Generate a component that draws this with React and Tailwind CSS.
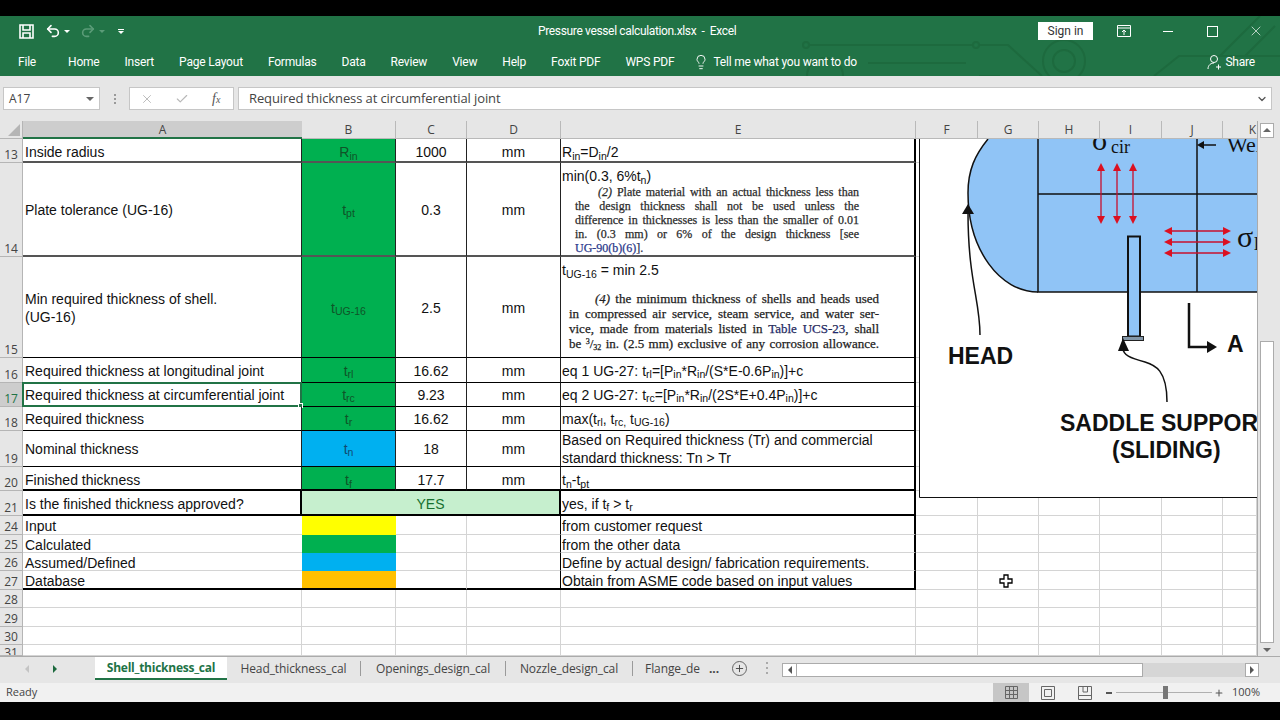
import { Undo2, Redo2, Lightbulb, X, Check, ChevronDown, Plus } from 'lucide-react'

const COLS = 'grid grid-rows-1 grid-cols-[23px_279px_94px_71px_94px_355px_62px_61px_61px_62px_61px_34px]'
const GREEN = 'bg-[#00b050] text-[#0f5428]'
const BLUE = 'bg-[#00b0f0] text-[#124a72]'

function S({ children }) {
    return <sub className="text-[10.5px]">{children}</sub>
}

function BookOne() {
    const lines = [
        'difference in thicknesses is less than the smaller of 0.01',
        'in. (0.3 mm) or 6% of the design thickness [see',
    ]
    return (
        <div className="ml-[13px] w-[284px] font-['Liberation_Serif',serif] text-[12px] leading-[14px] text-[#2b2b2b] [-webkit-text-stroke:0.25px_#2b2b2b] [text-align-last:justify]">
            <div className="pl-[23px]"><i>(2)</i> Plate material with an actual thickness less than</div>
            <div>the design thickness shall not be used unless the</div>
            {lines.map((l) => <div key={l}>{l}</div>)}
            <div className="text-[#2b3a8c] [-webkit-text-stroke:0.25px_#2b3a8c] [text-align-last:left]">UG-90(b)(6)<span className="text-[#2b2b2b]">].</span></div>
        </div>
    )
}

function BookTwo() {
    return (
        <div className="ml-[7px] mt-[8px] w-[310px] font-['Liberation_Serif',serif] text-[13px] leading-[15px] text-[#222] [-webkit-text-stroke:0.25px_#222] [text-align-last:justify]">
            <div className="pl-[26px]"><i>(4)</i> the minimum thickness of shells and heads used</div>
            <div>in compressed air service, steam service, and water ser-</div>
            <div>vice, made from materials listed in <span className="text-[#1f2f96]">Table UCS-23</span>, shall</div>
            <div>be <sup className="text-[8px]">3</sup>/<sub className="text-[8px]">32</sub> in. (2.5 mm) exclusive of any corrosion allowance.</div>
        </div>
    )
}

const rows = [
    { n: 13, h: 'h-[24px]', pad: 'pt-[4px]', line: 'border-b-2 border-b-[#555]', a: 'Inside radius', b: <>R<S>in</S></>, fill: GREEN, c: '1000', d: 'mm', e: <>R<S>in</S>=D<S>in</S>/2</> },
    { n: 14, h: 'h-[94px]', pad: 'pt-[1px]', line: 'border-b-2 border-b-[#555]', a: 'Plate tolerance (UG-16)', b: <>t<S>pt</S></>, fill: GREEN, c: '0.3', d: 'mm', top: true, e: <><div className="-mb-[4px] leading-[26px]">min(0.3, 6%t<S>n</S>)</div><BookOne /></> },
    { n: 15, h: 'h-[101px]', pad: 'pt-[1px]', line: 'border-b border-b-black', a: <>Min required thickness of shell.<br />(UG-16)</>, b: <>t<S>UG-16</S></>, fill: GREEN, c: '2.5', d: 'mm', top: true, e: <><div className="leading-[26px]">t<S>UG-16</S> = min 2.5</div><BookTwo /></> },
    { n: 16, h: 'h-[25px]', pad: 'pt-[1px]', line: 'border-b border-b-black', a: 'Required thickness at longitudinal joint', b: <>t<S>rl</S></>, fill: GREEN, c: '16.62', d: 'mm', e: <>eq 1 UG-27: t<S>rl</S>=[P<S>in</S>*R<S>in</S>/(S*E-0.6P<S>in</S>)]+c</> },
    { n: 17, h: 'h-[24px]', pad: '', line: 'border-b border-b-black', sel: true, a: 'Required thickness at circumferential joint', b: <>t<S>rc</S></>, fill: GREEN, c: '9.23', d: 'mm', e: <>eq 2 UG-27: t<S>rc</S>=[P<S>in</S>*R<S>in</S>/(2S*E+0.4P<S>in</S>)]+c</> },
    { n: 18, h: 'h-[24px]', pad: '', line: 'border-b border-b-black', a: 'Required thickness', b: <>t<S>r</S></>, fill: GREEN, c: '16.62', d: 'mm', e: <>max(t<S>rl</S>, t<S>rc,</S> t<S>UG-16</S>)</> },
    { n: 19, h: 'h-[36px]', pad: '', line: 'border-b border-b-black', a: 'Nominal thickness', b: <>t<S>n</S></>, fill: BLUE, c: '18', d: 'mm', e: <>Based on Required thickness (Tr) and commercial<br />standard thickness: Tn &gt; Tr</> },
    { n: 20, h: 'h-[24px]', pad: 'pt-[4px]', line: 'border-b-2 border-b-black', a: 'Finished thickness', b: <>t<S>f</S></>, fill: GREEN, c: '17.7', d: 'mm', e: <>t<S>n</S>-t<S>pt</S></> },
]

const legend = [
    { n: 24, h: 'h-[19px]', a: 'Input', fill: 'bg-[#ffff00]', e: 'from customer request' },
    { n: 25, h: 'h-[18px]', a: 'Calculated', fill: 'bg-[#00b050]', e: 'from the other data' },
    { n: 26, h: 'h-[18px]', a: 'Assumed/Defined', fill: 'bg-[#00b0f0]', e: 'Define by actual design/ fabrication requirements.' },
    { n: 27, h: 'h-[19px]', a: 'Database', fill: 'bg-[#ffc000]', e: 'Obtain from ASME code based on input values', last: true },
]

const empties = [
    { n: 28, h: 'h-[18px]' },
    { n: 29, h: 'h-[19px]' },
    { n: 30, h: 'h-[18px]' },
    { n: 31, h: 'h-[11px]' },
]

function RowNum({ n, sel, clip }) {
    return (
        <div className={`flex justify-center overflow-hidden border-r border-b border-[#b5b5b5] font-['Open_Sans',sans-serif] text-[12px] leading-[15px] ${clip ? 'items-start' : 'items-end'} ${sel ? 'bg-[#cdcdcd] text-[#217346]' : 'bg-[#e6e6e6] text-[#444]'}`}>
            {n}
        </div>
    )
}

function Blank() {
    return (
        <>
            <div className="border-r border-b border-[#d4d4d4]" />
            <div className="border-r border-b border-[#d4d4d4]" />
            <div className="border-r border-b border-[#d4d4d4]" />
            <div className="border-r border-b border-[#d4d4d4]" />
            <div className="border-r border-b border-[#d4d4d4]" />
            <div className="border-r border-b border-[#d4d4d4]" />
        </>
    )
}

function DataRow({ r }) {
    return (
        <div className={`${COLS} ${r.h}`}>
            <RowNum n={r.n} sel={r.sel} />
            <div className={`relative flex items-center whitespace-nowrap border-r border-r-[#222] pl-[2px] ${r.pad} ${r.line}`}>
                <div>{r.a}</div>
                {r.sel && (
                    <span className="absolute -top-[1px] -left-[1px] -right-[1px] -bottom-[1px] border-2 border-[#217346]">
                        <span className="absolute -right-[3px] -bottom-[3px] h-[5px] w-[5px] border border-white bg-[#217346]" />
                    </span>
                )}
            </div>
            <div className={`flex items-center justify-center border-r border-r-[#222] ${r.pad} ${r.fill} ${r.line}`}><div>{r.b}</div></div>
            <div className={`flex items-center justify-center border-r border-r-[#222] ${r.pad} ${r.line}`}>{r.c}</div>
            <div className={`flex items-center justify-center border-r border-r-[#222] ${r.pad} ${r.line}`}>{r.d}</div>
            <div className={`overflow-hidden border-r-2 border-r-black pl-[1px] ${r.top ? 'block' : `flex items-center ${r.pad}`} ${r.line}`}>
                {r.top ? r.e : <div>{r.e}</div>}
            </div>
            <Blank />
        </div>
    )
}

function Drawing() {
    return (
        <svg className="absolute left-[919px] top-0 h-[359px] w-[338px] bg-white" viewBox="919 139 338 359">
            <path d="M1038 292 C1000 292 968 250 968 193 C968 170 975 155 988 139 L1257 139 L1257 292 Z" fill="#90c4f6" />
            <path d="M1038 292 C1000 292 968 250 968 193 C968 170 975 155 988 139" fill="none" stroke="#111" strokeWidth="1.5" />
            <path d="M1038 139 V292 H1257 M1038 194 H1257 M1197 139 V292" fill="none" stroke="#111" strokeWidth="1.5" />
            <text x="1092" y="150" fontFamily="Liberation Serif, serif" fontSize="30" fill="#111">σ</text>
            <text x="1111" y="153" fontFamily="Liberation Serif, serif" fontSize="18" fill="#111">cir</text>
            <path d="M1199 145 H1216" stroke="#111" strokeWidth="1.5" />
            <path d="M1197 145 L1204 141 V149 Z" fill="#111" />
            <text x="1227" y="152" fontFamily="Liberation Serif, serif" fontSize="22" fill="#111">Wel</text>
            <g stroke="#c8102e" strokeWidth="1.3" fill="#dc1020">
                <path d="M1101 168 V219 M1117 168 V219 M1133 168 V219 M1169 231 H1226 M1169 242 H1226 M1169 253 H1226" />
                <g stroke="none">
                    <path d="M1101 163 L1105 171 H1097 Z M1117 163 L1121 171 H1113 Z M1133 163 L1137 171 H1129 Z" />
                    <path d="M1101 224 L1105 216 H1097 Z M1117 224 L1121 216 H1113 Z M1133 224 L1137 216 H1129 Z" />
                    <path d="M1164 231 L1172 227 V235 Z M1164 242 L1172 238 V246 Z M1164 253 L1172 249 V257 Z" />
                    <path d="M1231 231 L1223 227 V235 Z M1231 242 L1223 238 V246 Z M1231 253 L1223 249 V257 Z" />
                </g>
            </g>
            <text x="1237" y="247" fontFamily="Liberation Serif, serif" fontSize="30" fill="#111">σ</text>
            <text x="1254" y="250" fontFamily="Liberation Serif, serif" fontSize="18" fill="#111">l</text>
            <rect x="1128" y="236.5" width="12" height="100" fill="#90c4f6" stroke="#111" strokeWidth="2" />
            <rect x="1122.5" y="336.5" width="21" height="4" fill="#8296a8" stroke="#222" strokeWidth="1" />
            <path d="M980 335 C980 300 968 280 968 212" fill="none" stroke="#111" strokeWidth="1.5" />
            <path d="M968 204 L974 214 H962 Z" fill="#111" />
            <path d="M1167 402 C1167 370 1155 365 1145 362 C1130 358 1123 355 1123 348" fill="none" stroke="#111" strokeWidth="1.5" />
            <path d="M1123 338 L1129 351 H1118 Z" fill="#111" />
            <path d="M1189 303 V347 H1209" fill="none" stroke="#111" strokeWidth="2.5" />
            <path d="M1217 347 L1207 341 V353 Z" fill="#111" />
            <g fontFamily="Liberation Sans, sans-serif" fontWeight="700" fill="#111">
                <text x="1227" y="352" fontSize="23">A</text>
                <text x="948" y="364" fontSize="23">HEAD</text>
                <text x="1060" y="431" fontSize="23">SADDLE SUPPORT</text>
                <text x="1112" y="458" fontSize="23">(SLIDING)</text>
            </g>
            <path d="M919.5 139 V497.5 H1257" fill="none" stroke="#111" strokeWidth="1" />
        </svg>
    )
}

function TitleBar() {
    return (
        <div className="relative flex h-[30px] items-center font-['Roboto',sans-serif] text-white">
            <svg className="absolute left-0 top-0 h-[60px] w-[1280px]" viewBox="0 0 1280 60" fill="none" stroke="#1d6a3e" strokeWidth="2">
                <path d="M810 29 H974 M979 29 H1008 L1042 60 M868 47 H966 M979 60 H1000 M1154 60 L1179 40 H1280 M1220 40 L1260 0 M1245 40 L1275 10" />
                <circle cx="806" cy="29" r="3" />
                <circle cx="976" cy="29" r="3" />
                <circle cx="1064" cy="45" r="21" />
                <circle cx="1064" cy="45" r="11" />
                <circle cx="825" cy="60" r="18" />
            </svg>
            <div className="relative flex w-[538px] items-center pl-[19px]">
                <svg width="15" height="15" viewBox="0 0 15 15" fill="none" stroke="white" strokeWidth="1.6">
                    <path d="M1 1 H14 V14 H1 Z M4 1 V6 H11 V1 M4 14 V9 H11 V14" />
                </svg>
                <Undo2 className="ml-[11px]" size={16} strokeWidth={2.4} />
                <span className="ml-[3px] h-0 w-0 border-x-[3px] border-t-[3px] border-x-transparent border-t-white" />
                <Redo2 className="ml-[10px] text-[#5b9c78]" size={16} strokeWidth={2.4} />
                <span className="ml-[3px] h-0 w-0 border-x-[3px] border-t-[3px] border-x-transparent border-t-[#5b9c78]" />
                <span className="ml-[13px] flex flex-col items-center gap-[1px]">
                    <span className="h-[1px] w-[6px] bg-white" />
                    <span className="h-0 w-0 border-x-[3px] border-t-[3px] border-x-transparent border-t-white" />
                </span>
            </div>
            <div className="relative whitespace-pre text-[12px] tracking-[-0.35px]">Pressure vessel calculation.xlsx  -  Excel</div>
            <div className="relative ml-auto mr-[2px] flex items-center">
                <div className="mr-[9px] flex h-[18px] w-[55px] items-center justify-center bg-white text-[12px] text-[#333]">Sign in</div>
                <div className="flex w-[44px] justify-center">
                    <svg width="14" height="12" viewBox="0 0 14 12" fill="none" stroke="white"><path d="M.5.5 H13.5 V11.5 H.5 Z M.5 3 H13.5" /><path d="M7 10 V5 M5 7 L7 5 L9 7" /></svg>
                </div>
                <div className="flex w-[44px] justify-center"><span className="h-[1px] w-[10px] bg-white" /></div>
                <div className="flex w-[44px] justify-center"><span className="h-[11px] w-[11px] border border-white" /></div>
                <div className="flex w-[44px] justify-center"><X size={16} strokeWidth={1} /></div>
            </div>
        </div>
    )
}

function RibbonTabs() {
    const tabs = ['Home', 'Insert', 'Page Layout', 'Formulas', 'Data', 'Review', 'View', 'Help', 'Foxit PDF', 'WPS PDF']
    return (
        <div className="relative flex h-[30px] items-center pl-[18px] pt-[1px] font-['Roboto',sans-serif] text-[12px] tracking-[-0.2px] text-white">
            <span className="mr-[32px]">File</span>
            <div className="flex gap-[25px]">
                {tabs.map((t) => <span key={t}>{t}</span>)}
            </div>
            <Lightbulb className="ml-[19px]" size={16} strokeWidth={1.4} />
            <span className="ml-[4px]">Tell me what you want to do</span>
            <div className="ml-auto mr-[25px] flex items-center gap-[3px]">
                <svg width="16" height="16" viewBox="0 0 16 16" fill="none" stroke="white">
                    <circle cx="8" cy="5" r="3.5" />
                    <path d="M2 15 C2 11 5 9 8 9 M10 13 H15 M12.5 10.5 V15.5" />
                </svg>
                <span>Share</span>
            </div>
        </div>
    )
}

function FormulaBar() {
    return (
        <div className="flex h-[45px] items-start bg-[#e6e6e6] pl-[3px] pt-[11px] font-['Open_Sans',sans-serif] text-[12px] text-[#444]">
            <div className="flex h-[23px] w-[97px] items-center justify-between border border-[#c6c6c6] bg-white pl-[5px] pr-[5px]">
                <span>A17</span>
                <span className="h-0 w-0 border-x-[4px] border-t-[4px] border-x-transparent border-t-[#666]" />
            </div>
            <div className="flex h-[23px] w-[29px] flex-col items-center justify-center gap-[2px]">
                <span className="h-[2px] w-[2px] bg-[#999]" />
                <span className="h-[2px] w-[2px] bg-[#999]" />
                <span className="h-[2px] w-[2px] bg-[#999]" />
            </div>
            <div className="flex h-[23px] w-[105px] items-center border border-[#c6c6c6] bg-white pl-[10px] text-[#b8b8b8]">
                <X size={14} strokeWidth={1.6} />
                <Check className="ml-[21px]" size={14} strokeWidth={2} />
                <span className="ml-[23px] font-['Liberation_Serif',serif] text-[14px] italic text-[#555]">f<span className="text-[10px]">x</span></span>
            </div>
            <div className="ml-[4px] flex h-[23px] w-[1034px] items-center justify-between border border-[#c6c6c6] bg-white pl-[10px] pr-[3px] text-[13px] tracking-[-0.1px]">
                <span>Required thickness at circumferential joint</span>
                <ChevronDown size={12} strokeWidth={2.5} className="text-[#555]" />
            </div>
        </div>
    )
}

function ColHeaders() {
    const letters = ['B', 'C', 'D', 'E', 'F', 'G', 'H', 'I', 'J']
    return (
        <div className={`${COLS} h-[18px] bg-[#e6e6e6] font-['Open_Sans',sans-serif] text-[12px] leading-[18px] text-[#444]`}>
            <div className="flex items-end justify-end border-r border-b border-[#b5b5b5] pr-[2px] pb-[2px]">
                <span className="h-0 w-0 border-b-[12px] border-l-[12px] border-b-[#b5b5b5] border-l-transparent" />
            </div>
            <div className="border-b-2 border-b-[#217346] bg-[#cdcdcd] text-center">A</div>
            {letters.map((l) => (
                <div key={l} className="border-r border-b border-[#b9b9b9] text-center">{l}</div>
            ))}
            <div className="border-b border-[#b9b9b9] pr-[1px] text-right">K</div>
        </div>
    )
}

function Sheet() {
    return (
        <div className="flex h-[535px] bg-white">
            <div className="w-[1257px]">
                <ColHeaders />
                <div className="relative h-[517px] overflow-hidden font-['Liberation_Sans',sans-serif] text-[14px] leading-[18px] text-[#111]">
                    {rows.map((r) => <DataRow key={r.n} r={r} />)}
                    <div className={`${COLS} h-[25px]`}>
                        <RowNum n={21} />
                        <div className="flex items-center border-r-2 border-b-2 border-black pl-[2px] pt-[2px]">Is the finished thickness approved?</div>
                        <div className="col-span-3 flex items-center justify-center border-r-2 border-b-2 border-black bg-[#c6efce] pt-[2px] text-[#17702f]">YES</div>
                        <div className="flex items-center border-r-2 border-b-2 border-black pl-[1px] pt-[2px]"><div>yes, if t<S>f</S> &gt; t<S>r</S></div></div>
                        <Blank />
                    </div>
                    {legend.map((r) => (
                        <div key={r.n} className={`${COLS} ${r.h}`}>
                            <RowNum n={r.n} />
                            <div className={`flex items-center pl-[2px] pt-[2px] ${r.last ? 'border-b-2 border-b-black' : 'border-b border-b-[#d4d4d4]'}`}>{r.a}</div>
                            <div className={`${r.fill} ${r.last ? 'border-b-2 border-b-black' : ''}`} />
                            <div className={`border-r border-r-[#d4d4d4] ${r.last ? 'border-b-2 border-b-black' : 'border-b border-b-[#d4d4d4]'}`} />
                            <div className={`border-r border-r-black ${r.last ? 'border-b-2 border-b-black' : 'border-b border-b-[#d4d4d4]'}`} />
                            <div className={`flex items-center border-r-2 border-r-black pl-[1px] pt-[2px] ${r.last ? 'border-b-2 border-b-black' : 'border-b border-b-[#d4d4d4]'}`}>{r.e}</div>
                            <Blank />
                        </div>
                    ))}
                    {empties.map((r) => (
                        <div key={r.n} className={`${COLS} ${r.h}`}>
                            <RowNum n={r.n} clip={r.n === 31} />
                            <div className="border-r border-b border-[#d4d4d4]" />
                            <div className="border-r border-b border-[#d4d4d4]" />
                            <div className="border-r border-b border-[#d4d4d4]" />
                            <div className="border-r border-b border-[#d4d4d4]" />
                            <div className="border-r border-b border-[#d4d4d4]" />
                            <Blank />
                        </div>
                    ))}
                    <Drawing />
                    <svg className="absolute left-[999px] top-[435px]" width="14" height="14" viewBox="0 0 14 14" fill="white" stroke="black" strokeWidth="1.3">
                        <path d="M5 1 H9 V5 H13 V9 H9 V13 H5 V9 H1 V5 H5 Z" />
                    </svg>
                </div>
            </div>
            <div className="flex w-[23px] flex-col items-center border-l border-[#ababab] bg-[#e6e6e6] pr-[4px] pt-[2px]">
                <div className="flex h-[15px] w-[14px] items-center justify-center border border-[#ababab] bg-white">
                    <span className="h-0 w-0 border-x-[4px] border-b-[4px] border-x-transparent border-b-[#666]" />
                </div>
                <div className="mt-[203px] h-[303px] w-[14px] border border-[#ababab] bg-white" />
                <div className="flex h-[13px] w-[14px] items-center justify-center">
                    <span className="h-0 w-0 border-x-[4px] border-t-[4px] border-x-transparent border-t-[#666]" />
                </div>
            </div>
        </div>
    )
}

function SheetTabs() {
    return (
        <div className="flex h-[27px] items-start border-t border-[#ababab] bg-[#e6e6e6] font-['Open_Sans',sans-serif] text-[12px] tracking-[-0.1px] text-[#444]">
            <div className="flex h-[23px] w-[95px] items-center pl-[25px]">
                <span className="h-0 w-0 border-y-[4px] border-r-[4px] border-y-transparent border-r-[#c4c4c4]" />
                <span className="ml-[24px] h-0 w-0 border-y-[4px] border-l-[4px] border-y-transparent border-l-[#1d6a3e]" />
            </div>
            <div className="flex h-[23px] w-[132px] items-center justify-center border-b-2 border-[#217346] bg-white font-bold tracking-[-0.25px] text-[#217346]">Shell_thickness_cal</div>
            <div className="mt-[4px] flex h-[15px] w-[134px] items-center justify-center border-r border-[#9a9a9a]">Head_thickness_cal</div>
            <div className="mt-[4px] flex h-[15px] w-[145px] items-center justify-center border-r border-[#9a9a9a]">Openings_design_cal</div>
            <div className="mt-[4px] flex h-[15px] w-[127px] items-center justify-center border-r border-[#9a9a9a]">Nozzle_design_cal</div>
            <div className="flex h-[23px] w-[67px] items-center justify-end overflow-hidden whitespace-nowrap">Flange_de</div>
            <div className="flex h-[23px] w-[28px] items-center justify-center font-bold">...</div>
            <div className="mt-[4px] ml-[4px] flex h-[15px] w-[15px] items-center justify-center rounded-full border border-[#666]"><Plus size={11} /></div>
            <div className="ml-[19px] mt-[5px] flex h-[12px] w-[2px] flex-col justify-between">
                <span className="h-[2px] w-[2px] bg-[#aaa]" />
                <span className="h-[2px] w-[2px] bg-[#aaa]" />
                <span className="h-[2px] w-[2px] bg-[#aaa]" />
            </div>
            <div className="ml-[14px] mt-[6px] flex h-[14px] w-[477px] bg-[#d6d6d6]">
                <div className="flex w-[15px] items-center justify-center border border-[#ababab] bg-white">
                    <span className="h-0 w-0 border-y-[4px] border-r-[4px] border-y-transparent border-r-[#555]" />
                </div>
                <div className="w-[346px] border-y border-r border-[#ababab] bg-white" />
                <div className="ml-auto flex w-[14px] items-center justify-center border border-[#ababab] bg-white">
                    <span className="h-0 w-0 border-y-[4px] border-l-[4px] border-y-transparent border-l-[#555]" />
                </div>
            </div>
        </div>
    )
}

function StatusBar() {
    return (
        <div className="flex h-[19px] items-center bg-[#f1f1f1] pl-[6px] font-['Open_Sans',sans-serif] text-[11px] text-[#444]">
            <span>Ready</span>
            <div className="ml-auto flex h-full items-center">
                <div className="flex h-full w-[36px] items-center justify-center bg-[#c6c6c6]">
                    <svg width="13" height="13" viewBox="0 0 13 13" fill="none" stroke="#666"><path d="M.5.5 H12.5 V12.5 H.5 Z M4.5.5 V12.5 M8.5.5 V12.5 M.5 4.5 H12.5 M.5 8.5 H12.5" /></svg>
                </div>
                <div className="flex h-full w-[37px] items-center justify-center">
                    <svg width="14" height="14" viewBox="0 0 14 14" fill="none" stroke="#666"><path d="M.5.5 H13.5 V13.5 H.5 Z M3.5 3.5 H10.5 V10.5 H3.5 Z" /></svg>
                </div>
                <div className="flex h-full w-[37px] items-center justify-center">
                    <svg width="14" height="14" viewBox="0 0 14 14" fill="none" stroke="#666"><path d="M.5.5 H13.5 V13.5 H.5 Z M.5 9.5 H13.5 M5 .5 V6 H9.5 V.5" /></svg>
                </div>
                <span className="ml-[3px] h-[2px] w-[6px] bg-[#555]" />
                <div className="relative ml-[4px] h-[1px] w-[96px] bg-[#b0b0b0]">
                    <span className="absolute left-[47px] -top-[6px] h-[13px] w-[5px] bg-[#777]" />
                </div>
                <Plus className="ml-[2px] text-[#555]" size={10} strokeWidth={2.5} />
                <span className="ml-[8px] mr-[20px]">100%</span>
            </div>
        </div>
    )
}

export default function App() {
    return (
        <div className="h-[720px] w-[1280px] overflow-hidden bg-black pt-[16px] font-['Open_Sans',sans-serif]">
            <div className="h-[60px] bg-[#217346]">
                <TitleBar />
                <RibbonTabs />
            </div>
            <FormulaBar />
            <Sheet />
            <SheetTabs />
            <StatusBar />
        </div>
    )
}
